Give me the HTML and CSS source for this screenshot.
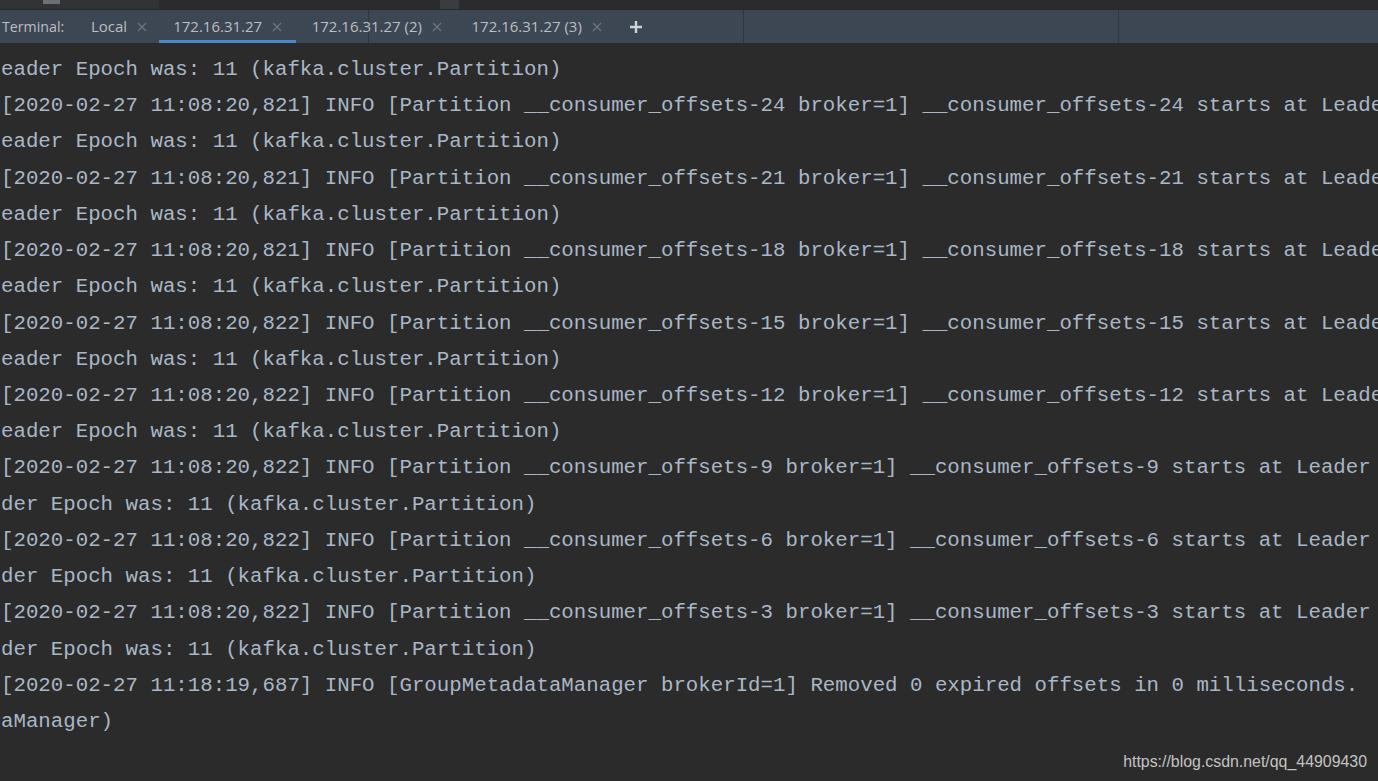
FILE: index.html
```html
<!DOCTYPE html>
<html>
<head>
<meta charset="utf-8">
<link rel="stylesheet" href="styles.css">
</head>
<body>
<div class="topstrip">
  <div class="seg seg-a"><span class="ico"></span></div>
  <div class="seg seg-b"></div>
  <div class="seg seg-c"></div>
</div>
<div class="tabbar">
  <span class="label">Terminal:</span>
  <div class="tab first"><span class="tname">Local</span><svg class="x" viewBox="0 0 10 10"><path d="M1 1L9 9M9 1L1 9"/></svg></div>
  <div class="tab active"><span class="tname">172.16.31.27</span><svg class="x" viewBox="0 0 10 10"><path d="M1 1L9 9M9 1L1 9"/></svg></div>
  <div class="tab wide"><span class="tname">172.16.31.27 (2)</span><svg class="x" viewBox="0 0 10 10"><path d="M1 1L9 9M9 1L1 9"/></svg></div>
  <div class="tab wide"><span class="tname">172.16.31.27 (3)</span><svg class="x" viewBox="0 0 10 10"><path d="M1 1L9 9M9 1L1 9"/></svg></div>
  <svg class="plus" viewBox="0 0 14 14"><path d="M7 1V13M1 7H13"/></svg>
</div>
<pre class="term">eader Epoch was: 11 (kafka.cluster.Partition)
[2020-02-27 11:08:20,821] INFO [Partition __consumer_offsets-24 broker=1] __consumer_offsets-24 starts at Leader
eader Epoch was: 11 (kafka.cluster.Partition)
[2020-02-27 11:08:20,821] INFO [Partition __consumer_offsets-21 broker=1] __consumer_offsets-21 starts at Leader
eader Epoch was: 11 (kafka.cluster.Partition)
[2020-02-27 11:08:20,821] INFO [Partition __consumer_offsets-18 broker=1] __consumer_offsets-18 starts at Leader
eader Epoch was: 11 (kafka.cluster.Partition)
[2020-02-27 11:08:20,822] INFO [Partition __consumer_offsets-15 broker=1] __consumer_offsets-15 starts at Leader
eader Epoch was: 11 (kafka.cluster.Partition)
[2020-02-27 11:08:20,822] INFO [Partition __consumer_offsets-12 broker=1] __consumer_offsets-12 starts at Leader
eader Epoch was: 11 (kafka.cluster.Partition)
[2020-02-27 11:08:20,822] INFO [Partition __consumer_offsets-9 broker=1] __consumer_offsets-9 starts at Leader
der Epoch was: 11 (kafka.cluster.Partition)
[2020-02-27 11:08:20,822] INFO [Partition __consumer_offsets-6 broker=1] __consumer_offsets-6 starts at Leader
der Epoch was: 11 (kafka.cluster.Partition)
[2020-02-27 11:08:20,822] INFO [Partition __consumer_offsets-3 broker=1] __consumer_offsets-3 starts at Leader
der Epoch was: 11 (kafka.cluster.Partition)
[2020-02-27 11:18:19,687] INFO [GroupMetadataManager brokerId=1] Removed 0 expired offsets in 0 milliseconds.
aManager)</pre>
<div class="watermark">https://blog.csdn.net/qq_44909430</div>
</body>
</html>
```
FILE: styles.css
```css
html, body {
  margin: 0;
  padding: 0;
}
body {
  width: 1378px;
  height: 781px;
  overflow: hidden;
  background: #2b2b2b;
  position: relative;
}
.topstrip {
  height: 9px;
  display: flex;
  background: #2b2b2b;
  border-bottom: 1px solid #262a2f;
}
.seg-a {
  width: 159px;
  background: #313335;
}
.ico {
  display: block;
  margin-left: 43px;
  width: 17px;
  height: 4px;
  background: #6d7073;
}
.seg-b {
  width: 281px;
}
.seg-c {
  width: 19px;
  background: #3a3d40;
}
.tabbar {
  height: 33px;
  display: flex;
  align-items: center;
  background-color: #3d4653;
  background-image: repeating-linear-gradient(to right, transparent 0 368px, #2f3640 368px 369px, transparent 369px 375px);
  font-family: "Open Sans", "Noto Sans", sans-serif;
  color: #bbbfc4;
}
.label {
  font-size: 14.2px;
  padding-left: 2px;
  width: 72px;
  flex: none;
}
.tab {
  height: 33px;
  box-sizing: border-box;
  display: flex;
  align-items: center;
  gap: 10px;
  padding: 0 14px 0 14px;
  font-size: 15px;
  white-space: pre;
  flex: none;
}
.tab.first {
  padding-left: 17px;
  padding-right: 12px;
}
.tab.wide {
  padding-left: 15.5px;
}
.tab.active {
  box-shadow: inset 0 -3px 0 #4a88c7;
}
.tname {
  line-height: 20px;
  margin-top: -1px;
}
.x {
  width: 10px;
  height: 10px;
  fill: none;
  stroke: #6c7580;
  stroke-width: 1.3;
}
.plus {
  width: 14px;
  height: 14px;
  margin-left: 13px;
  fill: none;
  stroke: #cfd3d7;
  stroke-width: 2.4;
  flex: none;
}
.term {
  margin: 0;
  padding: 9px 0 0 1px;
  font-family: "Liberation Mono", "DejaVu Sans Mono", monospace;
  font-size: 20.75px;
  line-height: 36.22px;
  color: #a9b7c6;
  white-space: pre;
  overflow: hidden;
}
.watermark {
  position: absolute;
  right: 11px;
  bottom: 10px;
  font-family: "Liberation Sans", Arial, sans-serif;
  font-size: 15.9px;
  color: #c3c3c3;
}
```
